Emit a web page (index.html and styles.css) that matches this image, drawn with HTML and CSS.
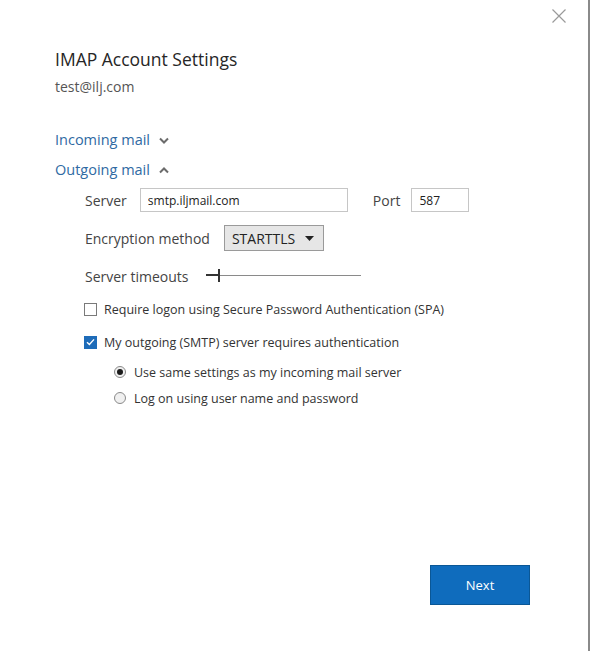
FILE: index.html
```html
<html>
  <head>
    <title>IMAP Account Settings</title>
    <link rel="stylesheet" href="styles.css">
  </head>

  <body>
    <div class="dialog">
      <div class="close">
        <svg width="14" height="14" viewBox="0 0 14 14">
          <path d="M0.5 0.5 L13.5 13.5 M13.5 0.5 L0.5 13.5" stroke="#9a9a9a" stroke-width="1.2" fill="none"/>
        </svg>
      </div>

      <h1 class="title">IMAP Account Settings</h1>
      <p class="account">test@ilj.com</p>

      <div class="section-toggle first">
        <span>Incoming mail</span>
        <svg class="chevron" width="10" height="7" viewBox="0 0 10 7">
          <path d="M1 1.5 L5 5.5 L9 1.5" stroke="#6b6b6b" stroke-width="2" fill="none"/>
        </svg>
      </div>

      <div class="section-toggle">
        <span>Outgoing mail</span>
        <svg class="chevron" width="10" height="7" viewBox="0 0 10 7">
          <path d="M1 5.5 L5 1.5 L9 5.5" stroke="#6b6b6b" stroke-width="2" fill="none"/>
        </svg>
      </div>

      <div class="section-body">
        <div class="row server-row">
          <label class="field-label">Server</label>
          <input class="text-input server-input" type="text" value="smtp.iljmail.com"/>
          <label class="field-label port-label">Port</label>
          <input class="text-input port-input" type="text" value="587"/>
        </div>

        <div class="row encryption-row">
          <label class="field-label">Encryption method</label>
          <div class="select">
            <span>STARTTLS</span>
            <svg width="9" height="5" viewBox="0 0 9 5"><path d="M0 0 L9 0 L4.5 5 Z" fill="#222"/></svg>
          </div>
        </div>

        <div class="row timeout-row">
          <label class="field-label">Server timeouts</label>
          <div class="slider">
            <div class="slider-thumb"></div>
          </div>
        </div>

        <div class="row check-row spa-row">
          <span class="checkbox"></span>
          <span>Require logon using Secure Password Authentication (SPA)</span>
        </div>

        <div class="row check-row auth-row">
          <span class="checkbox checked">
            <svg width="9" height="8" viewBox="0 0 9 8"><path d="M1 4.2 L3.4 6.4 L8 1.4" stroke="#fff" stroke-width="1.4" fill="none"/></svg>
          </span>
          <span>My outgoing (SMTP) server requires authentication</span>
        </div>

        <div class="radio-group">
          <div class="row radio-row">
            <span class="radio selected"></span>
            <span>Use same settings as my incoming mail server</span>
          </div>
          <div class="row radio-row">
            <span class="radio"></span>
            <span>Log on using user name and password</span>
          </div>
        </div>
      </div>

      <div class="footer">
        <button class="next-button">Next</button>
      </div>
    </div>
  </body>
</html>
```

FILE: styles.css
```css
*, *:before, *:after {
  box-sizing: border-box;
  padding: 0;
  margin: 0;
}

body {
  background: #fff;
  font-family: "Open Sans", "Noto Sans", sans-serif;
  color: #333;
}

.dialog {
  position: relative;
  display: flex;
  flex-direction: column;
  width: 590px;
  height: 651px;
  padding: 0 0 46px 55px;
  border-right: 2px solid #8a8a8a;
}

.close {
  position: absolute;
  top: 9px;
  left: 552px;
  width: 14px;
  height: 14px;
}

.title {
  margin-top: 46px;
  font-size: 17.5px;
  font-weight: normal;
  line-height: 26px;
  color: #262626;
}

.account {
  margin-top: 5px;
  font-size: 14px;
  line-height: 20px;
  color: #555;
}

.section-toggle {
  display: flex;
  align-items: center;
  height: 30px;
  font-size: 14.5px;
  color: #2f6aa3;
}

.section-toggle.first {
  margin-top: 27px;
}

.chevron {
  margin-left: 9px;
  margin-top: 2px;
}

.section-body {
  padding-left: 30px;
}

.row {
  display: flex;
  align-items: center;
}

.field-label {
  font-size: 14px;
  color: #444;
}

.server-row {
  margin-top: 1px;
  height: 30px;
}

.text-input {
  height: 24px;
  border: 1px solid #c6c6c6;
  font-family: inherit;
  font-size: 12px;
  color: #222;
  padding: 0 7px;
  outline: none;
}

.server-input {
  width: 208px;
  margin-left: 13px;
}

.port-label {
  margin-left: 25px;
}

.port-input {
  width: 58px;
  margin-left: 11px;
}

.encryption-row {
  margin-top: 9px;
  height: 28px;
}

.select {
  display: flex;
  align-items: center;
  justify-content: space-between;
  width: 100px;
  height: 26px;
  margin-left: 14px;
  padding: 0 9px 0 7px;
  background: #e6e6e6;
  border: 1px solid #9a9a9a;
  font-size: 14px;
  color: #222;
}

.timeout-row {
  margin-top: 10px;
  height: 28px;
}

.slider {
  position: relative;
  width: 155px;
  height: 1px;
  margin-left: 17px;
  margin-top: -2px;
  background: #8a8a8a;
}

.slider::before {
  content: "";
  position: absolute;
  left: 0;
  top: -1px;
  width: 14px;
  height: 2px;
  background: #333;
}

.slider-thumb {
  position: absolute;
  left: 12px;
  top: -6px;
  width: 2px;
  height: 13px;
  background: #333;
}

.check-row {
  height: 20px;
  font-size: 12.5px;
  color: #333;
}

.spa-row {
  margin-top: 9px;
  margin-left: -1px;
}

.auth-row {
  margin-top: 13px;
  margin-left: -1px;
}

.checkbox {
  display: flex;
  align-items: center;
  justify-content: center;
  width: 13px;
  height: 13px;
  margin-right: 7px;
  border: 1px solid #7a7a7a;
  background: #fff;
}

.checkbox.checked {
  background: #1e6cb9;
  border-color: #1e6cb9;
}

.radio-group {
  padding-left: 29px;
  margin-top: 7px;
}

.radio-row {
  height: 26px;
  font-size: 12.5px;
  color: #333;
}

.radio {
  position: relative;
  width: 12px;
  height: 12px;
  margin-right: 8px;
  border-radius: 50%;
  border: 1px solid #8a8a8a;
  background: #f0f0f0;
}

.radio.selected::after {
  content: "";
  position: absolute;
  left: 2px;
  top: 2px;
  width: 6px;
  height: 6px;
  border-radius: 50%;
  background: #1a1a1a;
}

.footer {
  margin-top: auto;
  display: flex;
  justify-content: flex-end;
  padding-right: 58px;
}

.next-button {
  width: 100px;
  height: 40px;
  background: #0f6cbd;
  border: 1px solid #0a5796;
  color: #fff;
  font-family: inherit;
  font-size: 13px;
}
```
